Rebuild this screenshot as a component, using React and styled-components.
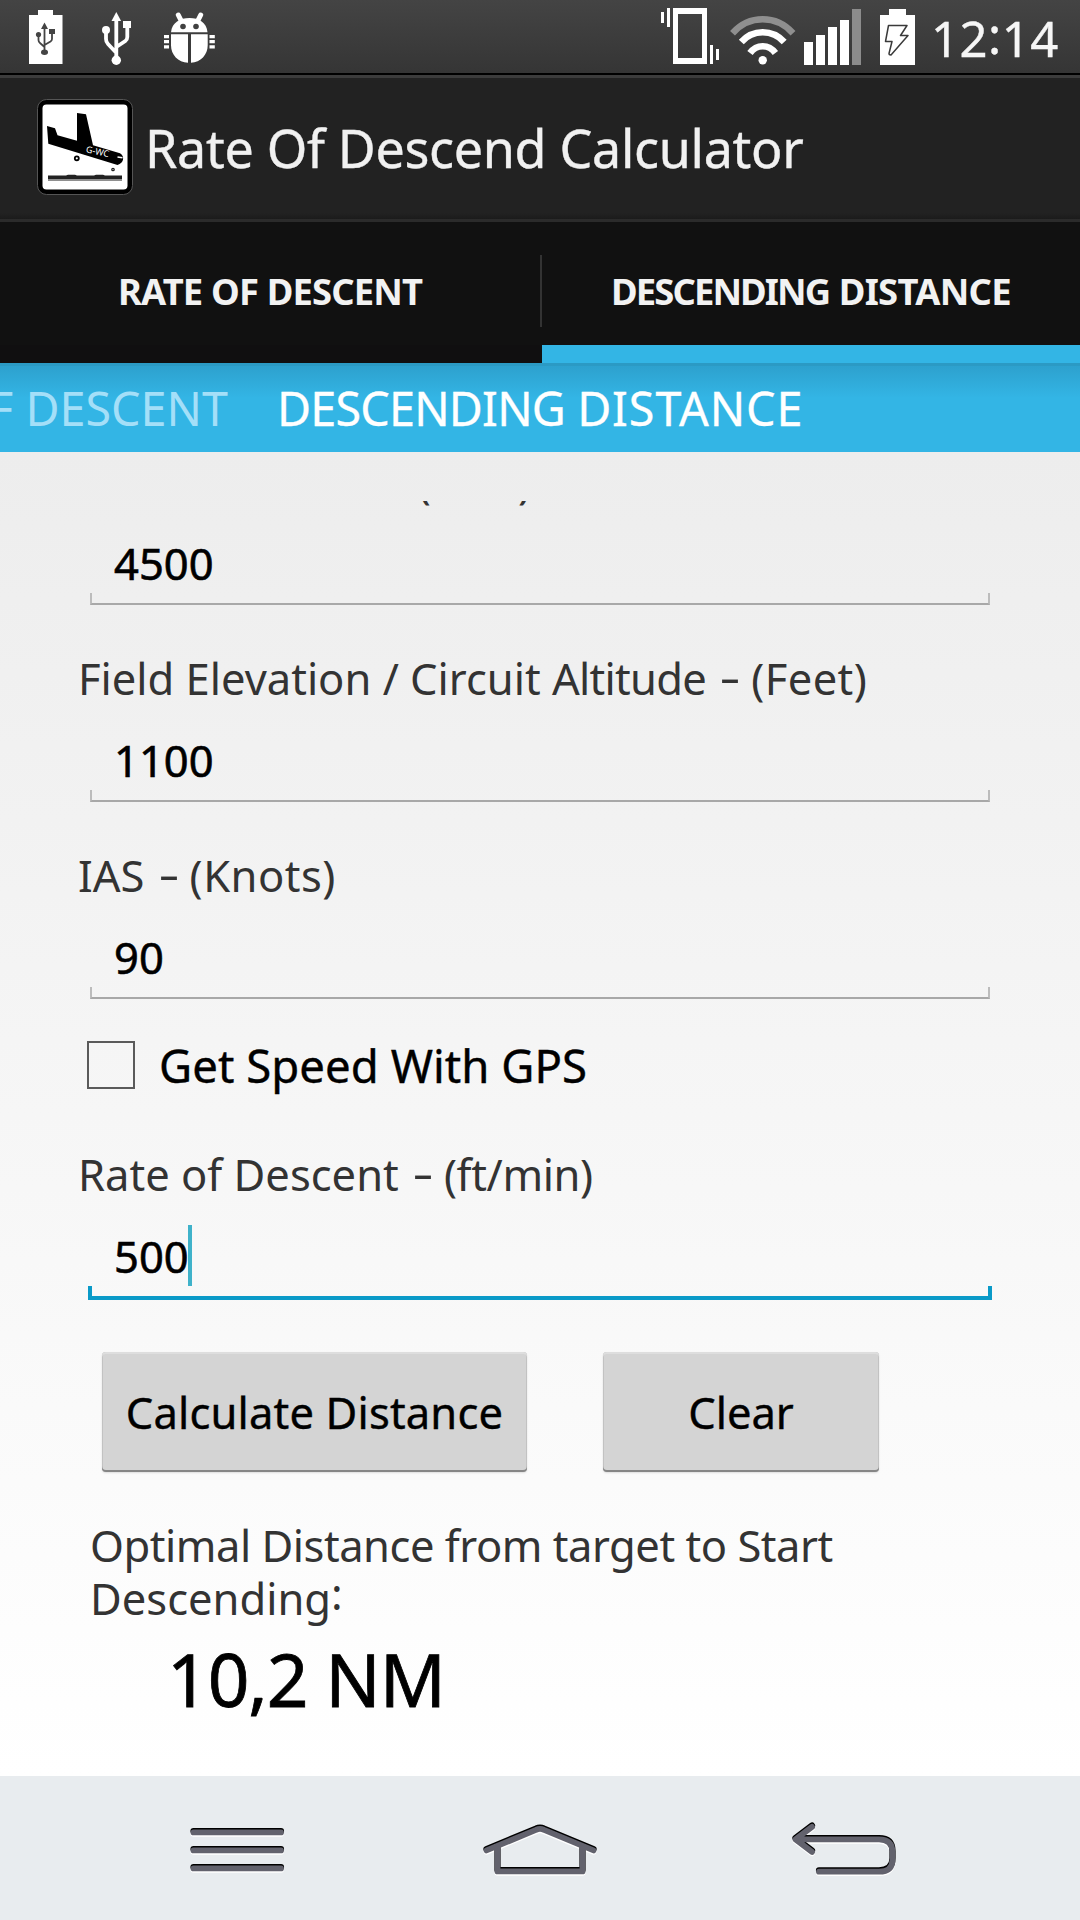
import React from "react";
import styled, { createGlobalStyle } from "styled-components";

const GlobalStyle = createGlobalStyle`
  * { box-sizing: border-box; }
  body { margin: 0; background: #fff; font-family: "Noto Sans", "Open Sans", sans-serif; }
`;

const Screen = styled.div`
  width: 1080px;
  height: 1920px;
  display: flex;
  flex-direction: column;
  overflow: hidden;
`;

const StatusBar = styled.div`
  height: 75px;
  flex: none;
  display: flex;
  justify-content: space-between;
  padding: 0 23px 0 29px;
  background: linear-gradient(#444, #353535);
  border-bottom: 2px solid #000;
`;

const StatusGroup = styled.div`
  display: flex;
  align-items: flex-start;
`;

const Glyph = styled.svg`
  display: block;
  flex: none;
  height: 73px;
  margin-left: ${(p) => p.$gap || 0}px;
`;

const Label = styled.span`
  display: block;
  white-space: pre;
  font-size: ${(p) => p.$size}px;
  line-height: ${(p) => p.$line}px;
  letter-spacing: ${(p) => p.$track || 0}px;
  color: ${(p) => p.$color || "#000"};
  font-weight: ${(p) => p.$weight || 400};
  -webkit-text-stroke: ${(p) => p.$ink || 0}px currentColor;
`;

const Word = styled.span`
  letter-spacing: ${(p) => p.$track}px;
`;

const Raised = styled.span`
  display: inline-block;
  transform: translateY(-${(p) => p.$by}px);
`;

const Clock = styled(Label)`
  margin-left: 16px;
  width: 126px;
  padding-top: 4px;
`;

const ActionBar = styled.header`
  height: 147px;
  flex: none;
  display: flex;
  align-items: flex-start;
  padding: 21px 0 0 37px;
  background: linear-gradient(#222 0 135px, #1b1b1b 141px);
  border-top: 3px solid #3c3c3c;
  border-bottom: 3px solid #2b2b2b;
`;

const Title = styled(Label)`
  margin: 6px 0 0 12px;
`;

const Tabs = styled.nav`
  height: 141px;
  flex: none;
  display: flex;
  align-items: stretch;
  background: #111;
`;

const Tab = styled.div`
  width: ${(p) => p.$width}px;
  flex: none;
  display: flex;
  justify-content: center;
  padding-top: 43px;
  border-bottom: 18px solid ${(p) => (p.$active ? "#33b5e5" : "#100f10")};
`;

const TabDivider = styled.div`
  width: 2px;
  height: 72px;
  margin-top: 33px;
  background: #333;
`;

const Strip = styled.div`
  height: 89px;
  flex: none;
  display: flex;
  justify-content: flex-start;
  overflow: hidden;
  border-top: 3px solid #2b9ac4;
  background: linear-gradient(#2da1ce, #33b5e5 32px);
`;

const PreviousTitle = styled.div`
  width: 228px;
  flex: none;
  display: flex;
  justify-content: flex-end;
  padding-top: 12px;
`;

const CurrentTitle = styled.div`
  padding: 12px 0 0 49px;
`;

const Page = styled.main`
  flex: 1;
  min-height: 0;
  padding-top: 49px;
  background: linear-gradient(#ededed, #ffffff);
`;

const Scroller = styled.div`
  height: 1275px;
  overflow: hidden;
`;

const Form = styled.div`
  margin-top: -50px;
  display: flex;
  flex-direction: column;
`;

const Field = styled.div`
  display: flex;
  flex-direction: column;
  padding-left: 78px;
  margin-bottom: ${(p) => (p.$last ? 0 : 43)}px;
`;

const Value = styled.div`
  display: flex;
  align-items: flex-start;
  height: 82px;
  padding: 22px 0 0 36px;
`;

const Caret = styled.i`
  width: 4px;
  height: 61px;
  margin: -1px 0 0 -1px;
  background: #3fb2ca;
`;

const Underline = styled.div`
  width: ${(p) => (p.$active ? 904 : 900)}px;
  height: ${(p) => (p.$active ? 14 : 12)}px;
  margin-left: ${(p) => (p.$active ? 10 : 12)}px;
  border: solid ${(p) => (p.$active ? "#0a9ac8" : "#a8a8a8")};
  border-width: 0 ${(p) => (p.$active ? 4 : 2)}px ${(p) => (p.$active ? 4 : 2)}px;
  border-left-color: ${(p) => (p.$active ? "#0a9ac8" : "#bcbcbc")};
  border-right-color: ${(p) => (p.$active ? "#0a9ac8" : "#bcbcbc")};
`;

const Dash = styled.span`
  display: inline-block;
  margin: 0 2.5px 0 6px;
  transform: translateY(-2px) scaleX(1.5);
`;

const CheckRow = styled.label`
  display: flex;
  align-items: center;
  height: 48px;
  margin: -1px 0 55px 87px;
`;

const CheckBox = styled.span`
  width: 48px;
  height: 48px;
  margin-right: 24px;
  border: 2px solid #5a5a5a;
`;

const Buttons = styled.div`
  display: flex;
  gap: 76px;
  margin: 52px 0 47px 102px;
`;

const Button = styled.button`
  width: ${(p) => p.$width}px;
  height: 120px;
  display: flex;
  justify-content: center;
  padding: 17px 0 0;
  border: 0;
  border-radius: 4px;
  background: #d4d4d4;
  font-family: inherit;
  box-shadow: inset 0 -2px 0 #868686, inset 0 2px 0 #dedede, inset -1px 0 0 #c2c2c2, inset 1px 0 0 #c2c2c2, 0 1px 2px rgba(0, 0, 0, 0.12);
`;

const Caption = styled.div`
  padding-left: 90px;
`;

const Result = styled.div`
  padding: 9px 0 0 167px;
`;

const NavBar = styled.footer`
  height: 144px;
  flex: none;
  display: flex;
  padding: 34px 0 0 180px;
  background: #e8ecef;
`;

const NavIcon = styled.svg`
  display: block;
  flex: none;
  margin-right: ${(p) => p.$after || 0}px;
`;

function BatteryUsb() {
  return (
    <Glyph width="34" viewBox="29 0 34 73">
      <path fill="#fff" d="M38 10h15v5h9.5v49H29V15h9z" />
      <g stroke="#444" fill="none" strokeWidth="1.8">
        <path d="M44.5 26v26M38.5 35v5q0 2 1.5 3l4.5 4M52 32v7q0 1.500-1.500 2.500L44.500 45" />
      </g>
      <g fill="#444">
        <path d="M44.500 22.500l3.500 6.500h-7z" />
        <circle cx="38.500" cy="34.500" r="2.600" />
        <rect x="49" y="29" width="6" height="5" />
        <ellipse cx="44.500" cy="52.300" rx="3.500" ry="2.700" />
      </g>
    </Glyph>
  );
}

function Usb() {
  return (
    <Glyph width="30" viewBox="102 0 30 73" $gap={39}>
      <g fill="none" stroke="#fff" strokeWidth="3.8">
        <path d="M116.300 18v42M106 30v9q0 3 2 5l8 8.500M127.300 24v13q0 2.500-2 4l-9 6" />
      </g>
      <g fill="#fff">
        <path d="M116.300 12l4.800 9h-9.600z" />
        <circle cx="106" cy="30" r="4" />
        <rect x="123" y="21" width="8" height="7" />
        <circle cx="116.300" cy="60.300" r="4.700" />
      </g>
    </Glyph>
  );
}

function Bug() {
  return (
    <Glyph width="52" viewBox="163 0 52 73" $gap={31}>
      <path stroke="#fff" strokeWidth="5" strokeLinecap="round" d="M178.300 15l3 6M200.700 15l-3 6" />
      <path fill="#fff" d="M171 32.300c1-10 9-14.300 18.500-14.300s17 4.300 18 14.300z" />
      <path fill="#fff" d="M171 34.300h17v28.500c-10-.5-17-8-17-17.500zM191 34.300h16.700v11c0 9.500-7 17-16.700 17.500z" />
      <circle cx="183" cy="26.500" r="2.800" fill="#404040" />
      <circle cx="196" cy="26.500" r="2.800" fill="#404040" />
      <path fill="#fff" d="M164 35h5v3.300h-5zM164 40h5v3.300h-5zM164 45.300h5v3.300h-5zM209.500 35h5.300v3.300h-5.300zM209.500 40h5.300v3.300h-5.300zM209.500 45.300h5.300v3.300h-5.300z" />
    </Glyph>
  );
}

function Vibrate() {
  return (
    <Glyph width="59" viewBox="661 0 59 73">
      <path fill="#fff" fillRule="evenodd" d="M673 8h34v56h-34zM678 14v44h24V14z" />
      <path fill="#fff" d="M661 12h3v11h-3zM667 8h3v19h-3zM710 45h3v19h-3zM716 49h3v11h-3z" />
    </Glyph>
  );
}

function Wifi() {
  return (
    <Glyph width="66" viewBox="730 0 66 73" $gap={10}>
      <g fill="none" strokeWidth="6.600">
        <path stroke="#8f8f8f" d="M732.500 33.200Q745 19.300 762.700 19.300T793 33.200" />
        <path stroke="#fff" d="M741.300 42Q750 32.300 762.700 32.300T784.200 42" />
        <path stroke="#fff" d="M750 53Q755 46.200 762.700 46.200T775.400 53" />
      </g>
      <circle cx="762.700" cy="60.300" r="4.200" fill="#fff" />
    </Glyph>
  );
}

function Signal() {
  return (
    <Glyph width="57" viewBox="804 0 57 73" $gap={8}>
      <path fill="#fff" d="M804 42h9v23h-9zM816 35h9v30h-9zM828 27h9v38h-9zM840 20h9v45h-9z" />
      <path fill="#8c8c8c" d="M852 9h9v56h-9z" />
    </Glyph>
  );
}

function Battery() {
  return (
    <Glyph width="35" viewBox="880 0 35 73" $gap={19}>
      <path fill="#fff" d="M889 9h17v6h9v50h-35V15h9z" />
      <path
        fill="none"
        stroke="#3a3a3a"
        strokeWidth="1.500"
        strokeLinejoin="round"
        d="M888.500 25.500h18.500l-6.500 10h7.500l-17 19.500c-1.500 0-2-.5-2-1.500l3-12h-6.500z"
      />
    </Glyph>
  );
}

function AppIcon() {
  return (
    <svg width="96" height="96" viewBox="37 99 96 96">
      <rect x="37.500" y="99.500" width="95" height="95" rx="9" fill="#000" stroke="#555" />
      <rect x="42.500" y="104.500" width="85" height="85" rx="4" fill="#fff" />
      <path d="M47 126l8 2.300 2.500 7L77 140.700V113l9 1.300 7 31 27 8c5 3 4 10-2.500 11.700L48.300 143.700z" />
      <path stroke="#fff" strokeWidth="1.500" d="M117.500 157l5 .8" />
      <text
        x="85.500"
        y="152.300"
        fill="#fff"
        fontFamily="Noto Sans, sans-serif"
        fontSize="9"
        transform="rotate(12 85.500 152.300)"
      >
        G-WC
      </text>
      <circle cx="76.800" cy="158.300" r="2" fill="#fff" stroke="#000" strokeWidth="1.800" />
      <circle cx="113" cy="169.500" r="1.200" fill="#fff" stroke="#222" strokeWidth="1.300" />
      <path fill="#222" d="M48 175.500h18l2-.8h7l2 .8h17l2-.8h7l2 .8h17v3.500H48z" />
      <path fill="#8f8f8f" d="M48 179h74v2H48z" />
    </svg>
  );
}

function Embossed({ d }) {
  return (
    <g fill="none" strokeLinecap="round" strokeLinejoin="round">
      <path d={d} stroke="#fff" strokeWidth="6" transform="translate(0 2.700)" />
      <path d={d} stroke="#000" strokeWidth="6.200" />
      <path d={d} stroke="#62626d" strokeWidth="5.800" transform="translate(0 1.400)" />
    </g>
  );
}

function FormField({ name, unit, unitTrack, value, active, last }) {
  const [head, tail] = name.split(/(?=Altitude$)/);
  return (
    <Field $last={last}>
      <Label $size={43.5} $line={60} $color="#333">
        {head}
        {tail && <Word $track={-0.7}>{tail}</Word>} <Dash>-</Dash>{" "}
        <Word $track={unitTrack}>({unit})</Word>
      </Label>
      <Value>
        <Label $size={43.5} $line={60} $ink={0.6}>{value}</Label>
        {active && <Caret />}
      </Value>
      <Underline $active={active} />
    </Field>
  );
}

export default function App() {
  return (
    <Screen>
      <GlobalStyle />
      <StatusBar>
        <StatusGroup>
          <BatteryUsb />
          <Usb />
          <Bug />
        </StatusGroup>
        <StatusGroup>
          <Vibrate />
          <Wifi />
          <Signal />
          <Battery />
          <Clock $size={49} $line={69} $track={0.5} $ink={0.4} $color="#f6f6f6">
            12<Raised $by={3}>:</Raised>14
          </Clock>
        </StatusGroup>
      </StatusBar>
      <ActionBar>
        <AppIcon />
        <Title $size={52} $line={86} $track={-0.3} $ink={0.4} $color="#f1f1f1">Rate Of Descend Calculator</Title>
      </ActionBar>
      <Tabs>
        <Tab $width={540}>
          <Label $size={36.4} $line={52} $track={-0.85} $weight={700} $color="#f2f2f2">RATE OF DESCENT</Label>
        </Tab>
        <TabDivider />
        <Tab $width={538} $active>
          <Label $size={36.4} $line={52} $weight={700} $color="#f2f2f2">
            <Word $track={-1.9}>DESCENDING</Word> <Word $track={-0.7}>DISTANCE</Word>
          </Label>
        </Tab>
      </Tabs>
      <Strip>
        <PreviousTitle>
          <Label $size={46.7} $line={60} $color="#a4dff8">RATE OF DESCENT</Label>
        </PreviousTitle>
        <CurrentTitle>
          <Label $size={46.7} $line={60} $ink={0.3} $color="#fff">
            <Word $track={-0.8}>DESCENDING</Word> <Word $track={0.9}>DISTANCE</Word>
          </Label>
        </CurrentTitle>
      </Strip>
      <Page>
        <Scroller>
          <Form>
            <FormField name="Cruise Altitude" unit="Feet" unitTrack={0} value="4500" />
            <FormField name="Field Elevation / Circuit Altitude" unit="Feet" unitTrack={0.4} value="1100" />
            <FormField name="IAS" unit="Knots" unitTrack={0.5} value="90" />
            <CheckRow>
              <CheckBox />
              <Label $size={45.5} $line={60} $track={0.05} $ink={0.4}>Get Speed With GPS</Label>
            </CheckRow>
            <FormField name="Rate of Descent" unit="ft/min" unitTrack={-0.35} value="500" active last />
            <Buttons>
              <Button $width={425}>
                <Label $size={43.5} $line={87} $track={0.17} $ink={0.4}>Calculate Distance</Label>
              </Button>
              <Button $width={276}>
                <Label $size={43.5} $line={87} $ink={0.4}>Clear</Label>
              </Button>
            </Buttons>
            <Caption>
              <Label $size={43.5} $line={53} $track={-0.47} $color="#333">Optimal Distance from target to Start</Label>
              <Label $size={43.5} $line={53} $color="#333">
                Descending<Raised $by={5}>:</Raised>
              </Label>
            </Caption>
            <Result>
              <Label $size={73} $line={90} $track={-1.1} $ink={0.8}>10,2 NM</Label>
            </Result>
          </Form>
        </Scroller>
      </Page>
      <NavBar>
        <NavIcon width="114" height="80" viewBox="180 1810 114 80" $after={176}>
          <Embossed d="M193.500 1831h87.500M193.500 1849h87.500M193.500 1867h87.500" />
        </NavIcon>
        <NavIcon width="140" height="80" viewBox="470 1810 140 80" $after={170}>
          <Embossed d="M497.500 1846V1870H582.500V1846M486.500 1849L536 1828.500Q540 1826.500 544 1828.500L593.500 1849" />
        </NavIcon>
        <NavIcon width="130" height="80" viewBox="780 1810 130 80">
          <Embossed d="M812 1825.500L795.500 1838L812 1850.500M798 1838H879Q892.500 1838 892.500 1851V1858Q892.500 1870.300 879 1870.300H819" />
        </NavIcon>
      </NavBar>
    </Screen>
  );
}
